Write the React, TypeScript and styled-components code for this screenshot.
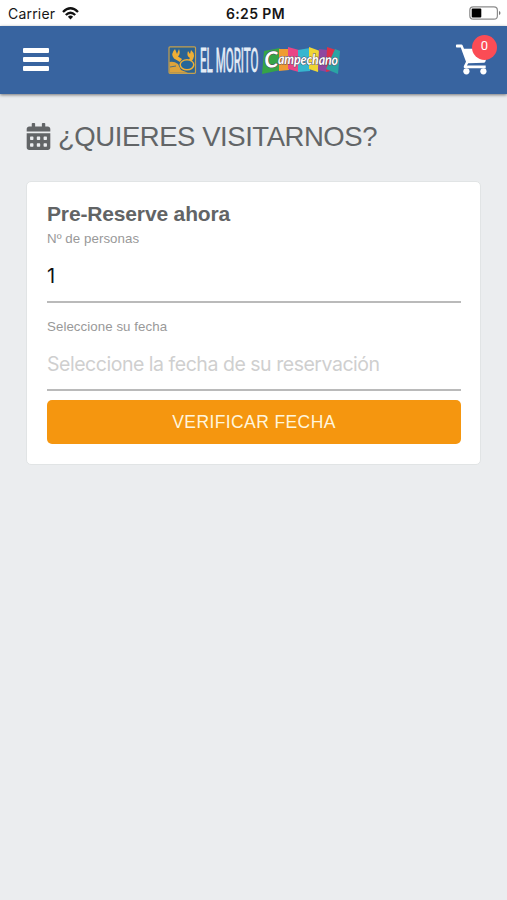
import React from 'react';
import styled, { createGlobalStyle } from 'styled-components';
import { FaCalendarAlt } from 'react-icons/fa';

const GlobalStyle = createGlobalStyle`
  * { box-sizing: border-box; }
  body { margin: 0; background: #ebedef; font-family: 'Liberation Sans', Arial, sans-serif; }
`;

const Screen = styled.div`
  min-height: 900px;
  display: flex;
  flex-direction: column;
  background: #ebedef;
`;

const StatusBar = styled.div`
  height: 26px;
  padding: 1px 6px 0 8px;
  display: grid;
  grid-template-columns: 1fr auto 1fr;
  align-items: center;
  background: #fff;
  color: #161616;
  font: 14px/24px Inter, sans-serif;
`;

const Carrier = styled.div`
  display: flex;
  align-items: center;
  gap: 7px;
  letter-spacing: 0.2px;
`;

const Clock = styled.div`
  font-weight: 600;
  font-size: 14px;
  letter-spacing: 0.4px;
  padding-left: 2px;
`;

const BatterySlot = styled.div`
  display: flex;
  justify-content: flex-end;
  padding-bottom: 1px;
`;

const NavBar = styled.header`
  height: 68px;
  display: flex;
  justify-content: space-between;
  align-items: center;
  padding: 0 16px 0 23px;
  background: #3864a0;
  box-shadow: 0 1px 3px rgba(0, 0, 0, 0.5);
`;

const MenuButton = styled.button`
  width: 26px;
  padding: 0 0 2px;
  border: 0;
  background: none;
  display: flex;
  flex-direction: column;
  gap: 4px;
`;

const MenuLine = styled.span`
  height: 5px;
  border-radius: 1px;
  background: #fff;
`;

const Logo = styled.svg`
  display: block;
  overflow: visible;
  margin-left: 119px;
  margin-right: auto;
`;

const CartButton = styled.div`
  position: relative;
  width: 36px;
  height: 36px;
  color: #fff;
  svg { display: block; }
`;

const CartBadge = styled.span`
  position: absolute;
  top: -7px;
  right: -6px;
  width: 25px;
  height: 25px;
  border-radius: 50%;
  background: #fb4c55;
  color: #fff;
  font: 13px/21px Roboto, sans-serif;
  text-align: center;
`;

const Content = styled.main`
  padding: 24px 26px 0;
`;

const Heading = styled.h1`
  margin: 0;
  height: 38px;
  display: flex;
  align-items: center;
  gap: 6px;
  color: #626567;
  font-size: 27.5px;
  line-height: 38px;
  font-weight: 400;
  letter-spacing: -0.45px;
  white-space: nowrap;
  svg { margin: 0 0 2px -1px; }
`;

const Card = styled.section`
  margin-top: 25px;
  height: 284px;
  padding: 19px 19px 0 20px;
  border: 1px solid #e1e4e5;
  border-radius: 5px;
  background: #fff;
  display: flex;
  flex-direction: column;
`;

const CardTitle = styled.h2`
  margin: 0;
  height: 26px;
  color: #626465;
  font-size: 21px;
  line-height: 26px;
  letter-spacing: -0.15px;
`;

const Field = styled.label<{ $top: number; $height: number }>`
  display: flex;
  flex-direction: column;
  padding-top: ${(p) => p.$top}px;
  height: ${(p) => p.$height}px;
  border-bottom: 2px solid #bababa;
`;

const FieldLabel = styled.span`
  color: #999;
  font-size: 13.3px;
  line-height: 18px;
  letter-spacing: 0.06px;
`;

const FieldInput = styled.input`
  width: 100%;
  height: 32px;
  margin-top: 12px;
  padding: 0;
  border: 0;
  outline: 0;
  background: transparent;
  color: #111;
  font: 20px/32px Inter, sans-serif;
  &::placeholder { color: #cfcfcf; opacity: 1; font-size: 19.5px; letter-spacing: -0.47px; }
`;

const SubmitButton = styled.button`
  height: 44px;
  margin-top: 9px;
  padding: 1px 0 0;
  border: 0;
  border-radius: 5px;
  background: #f5960f;
  color: #fff5dc;
  font: 17.5px/43px 'Liberation Sans', Arial, sans-serif;
  letter-spacing: 0.4px;
`;

const WifiIcon = () => (
  <svg width="17" height="13" viewBox="0 0 17 13">
    <g fill="none" stroke="#111" strokeWidth="2.3">
      <path d="M1 5 Q8.5 -2.4 16 5" />
      <path d="M3.8 8 Q8.5 3.4 13.2 8" />
    </g>
    <path d="M5.9 9.8 Q8.5 7.4 11.1 9.8 L8.5 12.5Z" fill="#111" />
  </svg>
);

const BatteryIcon = () => (
  <svg width="32" height="14" viewBox="0 0 32 14">
    <rect x="0.8" y="0.8" width="27.6" height="12.4" rx="3.5" fill="#fff" stroke="#8c8c8c" strokeWidth="1.2" />
    <rect x="2.7" y="2.5" width="9.6" height="9" rx="1" fill="#000" />
    <path d="M30 5v4q1.5-.4 1.5-2T30 5" fill="#777" />
  </svg>
);

const CartIcon = () => (
  <svg width="36" height="36" viewBox="0 0 36 36" fill="currentColor">
    <path d="M1.5 2.6H6.4Q7.3 2.6 7.7 3.5L9 6.7H32.6L30.6 19Q30.3 20.6 29 20.7L13.2 21.3 11.9 23.5H30.7V26.3H10.3Q8 26.1 9 23.7L11 19.8 7.2 9.5 5.8 5.6H1.5Q.9 5.4.9 4.1T1.5 2.6" />
    <circle cx="11.4" cy="29.3" r="3.1" />
    <circle cx="28.4" cy="29.3" r="3.1" />
  </svg>
);

const tiles = [
  { points: '96,9 112,6 113,28 94,32', fill: '#35a447' },
  { points: '111,7 121,7 121,28 111,29', fill: '#ef9c32' },
  { points: '120,5 131,8 131,30 120,27', fill: '#e94686' },
  { points: '130,8 142,6 142,29 130,30', fill: '#36b6cf' },
  { points: '141,5 152,9 150,30 141,27', fill: '#efd635' },
  { points: '151,7 160,8 159,30 150,28', fill: '#8e47a0' },
  { points: '159,5 168,8 167,28 158,30', fill: '#dd304a' },
  { points: '167,7 172,9 170,32 158,27', fill: '#2aa4a4' },
];

const BrandLogo = () => (
  <Logo width="175" height="36" viewBox="0 0 175 36" aria-label="El Morito Campechano">
    <rect x="1" y="4.8" width="26.5" height="26.5" rx="1" fill="#2a6393" stroke="#c3a04f" strokeWidth="1.2" />
    <path d="M1.5 20Q6 19 10 22L13 28 20 30.8H1.5z" fill="#dda33c" />
    <path d="M2 25l6-1" stroke="#2a6393" strokeWidth="0.8" />
    <path d="M7 7Q2 12 6 16.5L12 20 14 17 10 14.5Q13 12 11 7L9 12ZM23 8L22 12 20 9Q18 14 22 16L20 19 23 20Q29 13 23 8" fill="#efaf36" />
    <ellipse cx="19" cy="22.8" rx="6.8" ry="5" fill="#266699" stroke="#efaf36" strokeWidth="1.5" />
    <text transform="translate(32 30) scale(.44 1)" fill="#e5edf7" stroke="#e5edf7" strokeWidth=".8" fontFamily="Roboto, sans-serif" fontSize="34" textLength="133" lengthAdjust="spacingAndGlyphs">EL MORITO</text>
    {tiles.map((t) => <polygon key={t.points} points={t.points} fill={t.fill} />)}
    <g fill="#fff" stroke="#57435c" strokeWidth="1" paintOrder="stroke" fontFamily="Lato, sans-serif" fontWeight="700" fontStyle="italic">
      <text x="97" y="26" fontSize="22" transform="rotate(-5 97 26)">C</text>
      <text x="110" y="22" fontSize="14.5" textLength="60" lengthAdjust="spacingAndGlyphs" transform="rotate(1 110 22)">ampechano</text>
    </g>
  </Logo>
);

export default function App() {
  return (
    <Screen>
      <GlobalStyle />
      <StatusBar>
        <Carrier>Carrier <WifiIcon /></Carrier>
        <Clock>6:25 PM</Clock>
        <BatterySlot><BatteryIcon /></BatterySlot>
      </StatusBar>
      <NavBar>
        <MenuButton aria-label="Menú"><MenuLine /><MenuLine /><MenuLine /></MenuButton>
        <BrandLogo />
        <CartButton><CartIcon /><CartBadge>0</CartBadge></CartButton>
      </NavBar>
      <Content>
        <Heading><FaCalendarAlt size={27} />¿QUIERES VISITARNOS?</Heading>
        <Card>
          <CardTitle>Pre-Reserve ahora</CardTitle>
          <Field $top={3} $height={76}>
            <FieldLabel>Nº de personas</FieldLabel>
            <FieldInput defaultValue="1" />
          </Field>
          <Field $top={15} $height={88}>
            <FieldLabel>Seleccione su fecha</FieldLabel>
            <FieldInput placeholder="Seleccione la fecha de su reservación" />
          </Field>
          <SubmitButton>VERIFICAR FECHA</SubmitButton>
        </Card>
      </Content>
    </Screen>
  );
}
